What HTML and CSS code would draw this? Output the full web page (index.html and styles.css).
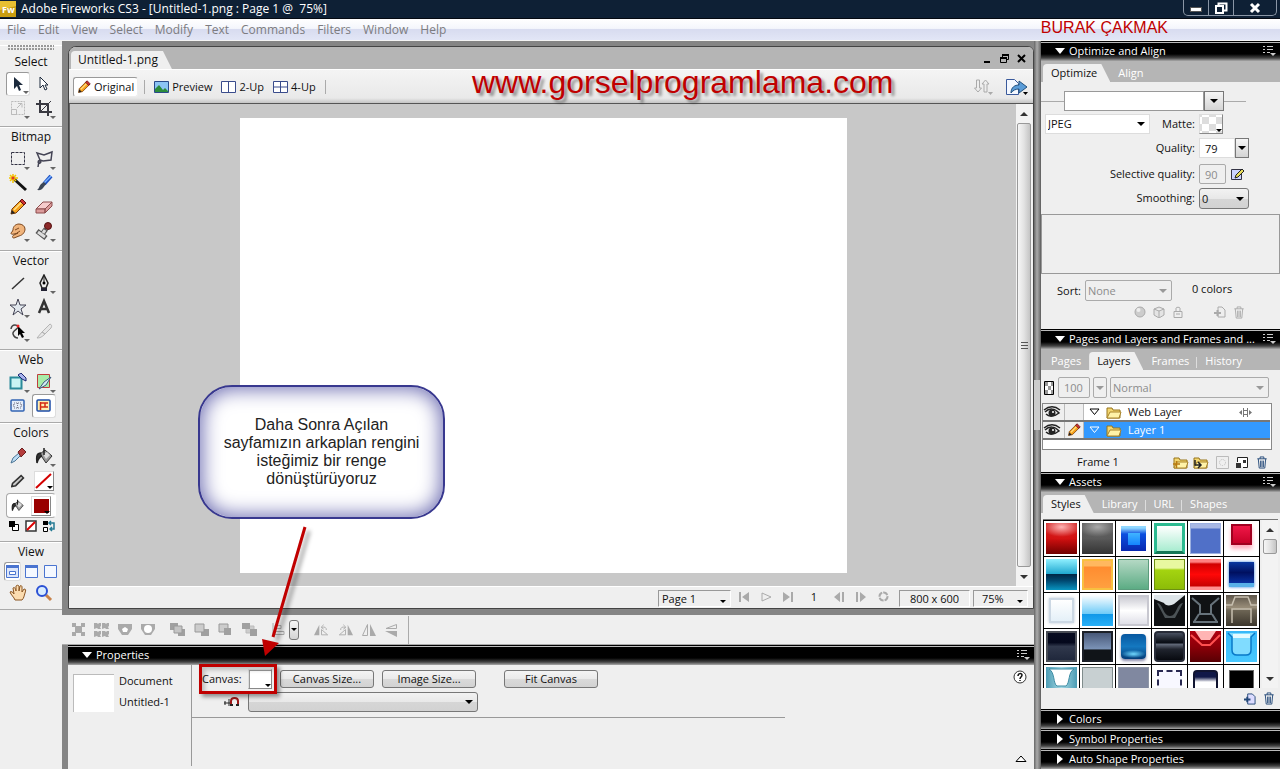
FILE: index.html
```html
<!DOCTYPE html>
<html lang="tr">
<head>
    <meta charset="UTF-8">
    <meta name="viewport" content="width=device-width, initial-scale=1.0">
    <title>Adobe Fireworks CS3</title>
    <link rel="stylesheet" href="styles.css">
</head>
<body>
<!-- shared icons -->
<svg class="defs" aria-hidden="true">
    <symbol id="i-menu" viewBox="0 0 14 12"><path d="M1 1h2v1H1zM1 4h2v1H1zM1 7h2v1H1zM5 1h6v1H5zM5 4h6v1H5zM5 7h3v1H5z" fill="#ccc"/><path d="M8 8h6l-3 3z" fill="#ccc"/></symbol>
    <symbol id="i-pencil" viewBox="0 0 18 18"><path d="M2 16l1-5 9-9 4 4-9 9z" fill="#f6a21c" stroke="#7a3c0c"/><path d="M5 12l8-8" stroke="#ffe38a" stroke-width="1.5"/><path d="M11 3l2-2 4 4-2 2z" fill="#c33" stroke="#611"/><path d="M2 16l1-4 3 3z" fill="#222"/></symbol>
    <symbol id="i-trash" viewBox="0 0 12 14"><path d="M1 3h10M4 3V1h4v2M2 3l1 10h6l1-10M4.500 5v7M6 5v7M7.500 5v7" fill="none" stroke="currentColor"/></symbol>
    <symbol id="i-new" viewBox="0 0 13 13"><path d="M4 1h5l3 3v8H4z" fill="#dcdcff" stroke="currentColor"/><path d="M0 7h7M3.500 4v6" stroke="currentColor" stroke-width="2"/></symbol>
    <symbol id="i-folder" viewBox="0 0 16 13"><path d="M1 12V2h5l1 2h7v8z" fill="#f4d770" stroke="#96741a"/><path d="M1 12l3-6h11l-2 6z" fill="#fff3a8" stroke="#a9842a"/></symbol>
    <symbol id="i-eye" viewBox="0 0 18 12"><path d="M1 4c5-4 11-4 16 0M2 6c4-4 10-4 14 1-5 4-10 4-13 1" fill="none" stroke="#222" stroke-width="1.500"/><circle cx="9" cy="7" r="3.500" fill="#222"/><circle cx="10" cy="6" r="1" fill="#fff"/></symbol>
    <symbol id="i-bucket" viewBox="0 0 18 18"><path d="M5 7l5-4 7 6-6 7z" fill="#999" stroke="#333"/><path d="M8 7l4-2 3 3-4 4z" fill="#ddd"/><path d="M9 8V1M6 6C2 6 1 9 2 16c1-4 2-6 5-7" fill="#333" stroke="#222" stroke-width="1.500"/></symbol>
</svg>

<header class="titlebar">
    <svg class="logo" width="16" height="16" viewBox="0 0 16 16"><rect width="16" height="16" fill="#c99d10"/><path d="M0 0h16v5L0 9z" fill="#e8c032"/><text x="2" y="12" font-size="9" font-weight="bold" fill="#fff" font-family="Open Sans, sans-serif">Fw</text></svg>
    <h1>Adobe Fireworks CS3 - [Untitled-1.png : Page 1 @ &nbsp;75%]</h1>
    <div class="window-buttons">
        <button aria-label="Minimize"><svg width="14" height="12"><rect x="1.500" y="5.500" width="11" height="4" fill="#fff" stroke="#555"/></svg></button>
        <button aria-label="Restore"><svg width="14" height="12"><path d="M4.500 1.500h8v7h-8z" fill="none" stroke="#fff" stroke-width="2"/><path d="M2 4h7v7H2z" fill="#0e2035" stroke="#fff" stroke-width="2"/></svg></button>
        <button class="wide" aria-label="Close"><svg width="14" height="12"><path d="M3 2l8 8M11 2l-8 8" stroke="#fff" stroke-width="3"/></svg></button>
    </div>
</header>

<nav class="menubar">
    <button>File</button><button>Edit</button><button>View</button><button>Select</button><button>Modify</button><button>Text</button><button>Commands</button><button>Filters</button><button>Window</button><button>Help</button>
    <span class="author">BURAK ÇAKMAK</span>
</nav>

<div class="workspace">
    <aside class="tools">
        <section class="first">
            <div class="grip"></div>
            <h2>Select</h2>
            <div class="tool-grid">
                <button class="more on" aria-label="Pointer"><svg width="18" height="18"><path d="M5 2v12l3-3 2 5 2-1-2-5h4z" fill="#1c2a3c"/></svg></button>
                <button aria-label="Subselection"><svg width="18" height="18"><path d="M5 2v11l3-3 2 5 2-1-2-4h3z" fill="#fff" stroke="#1c2a3c"/></svg></button>
                <button class="more" aria-label="Scale"><svg width="18" height="18" fill="none" stroke="#bbb"><path d="M2.500 2.500h13v13h-13z" stroke-dasharray="2 1"/><path d="M2.500 10.500h5v5h-5zM8 9l5-5M9 4.500h4v4"/></svg></button>
                <button class="more" aria-label="Crop"><svg width="18" height="18" fill="none" stroke="#3a3a42" stroke-width="2"><path d="M5 1v12h12M1 5h12v12"/><path d="M5 13L16 2" stroke-width="1"/></svg></button>
            </div>
        </section>
        <section>
            <h2>Bitmap</h2>
            <div class="tool-grid">
                <button class="more" aria-label="Marquee"><svg width="18" height="18"><path d="M2.500 2.500h13v12h-13z" fill="none" stroke="#334" stroke-dasharray="3 1"/></svg></button>
                <button class="more" aria-label="Lasso"><svg width="18" height="18"><path d="M2 3l7 2 8-3-1 8-8 1-3-1zM5 10c-3 1-2 4 0 3s0-3-1-2l-1 6" fill="none" stroke="#445" stroke-width="1.500"/></svg></button>
                <button aria-label="Magic Wand"><svg width="18" height="18"><path d="M5 5l12 11" stroke="#111" stroke-width="3"/><path d="M4 0v9M0 4h9M1 1l6 6M7 1L1 7" stroke="#f4c400" stroke-width="1.500"/><circle cx="4" cy="4" r="1.500" fill="#d33"/></svg></button>
                <button aria-label="Brush"><svg width="18" height="18"><path d="M16 2l-7 8" stroke="#1c50c4" stroke-width="4"/><path d="M16 2l-7 7" stroke="#7ab4ff" stroke-width="1.500"/><path d="M9 8l2 2-3 4c-2 3-5 2-6 2 2-1 2-4 4-6z" fill="#3c4656"/></svg></button>
                <button aria-label="Pencil"><svg width="18" height="18"><use href="#i-pencil"/></svg></button>
                <button aria-label="Eraser"><svg width="18" height="18"><path d="M1 11l7-7h9l-7 7z" fill="#f6cccc" stroke="#8c4c4c"/><path d="M1 11h9v4H1zM10 11l7-7v4l-7 7z" fill="#dc9c9c" stroke="#8c4c4c"/></svg></button>
                <button class="more" aria-label="Smudge"><svg width="18" height="18"><path d="M4 8c0-4 3-6 6-6s6 2 6 5-2 6-6 7l-5 2c-2 0-2-2 0-3l4-2-4 1c-3 1-4-1-2-2z" fill="#f0b47c" stroke="#7c4820"/><path d="M6 8l4-2M8 11l3-2" stroke="#7c4820"/></svg></button>
                <button class="more" aria-label="Rubber Stamp"><svg width="18" height="18"><circle cx="13" cy="4" r="3.500" fill="#8c2a2a" stroke="#511"/><path d="M11 7l-3 4M2 9l9 7" stroke="#555" stroke-width="5"/><path d="M3 10l7 5M10 8l-2 3" stroke="#ddd" stroke-width="3"/></svg></button>
            </div>
        </section>
        <section class="vector">
            <h2>Vector</h2>
            <div class="tool-grid">
                <button aria-label="Line"><svg width="18" height="18"><path d="M3 15L15 4" stroke="#333" stroke-width="1.500"/></svg></button>
                <button class="more" aria-label="Pen"><svg width="18" height="18"><path d="M9 1l4 8-2 5H7L5 9z" fill="#eee" stroke="#222" stroke-width="1.500"/><path d="M9 1v8" stroke="#222"/><circle cx="9" cy="9" r="1.500"/><path d="M6 14h6v3H6z" fill="#223"/></svg></button>
                <button class="more" aria-label="Star"><svg width="18" height="18"><path d="M9 1l2 6h6l-5 4 2 6-5-4-5 4 2-6-5-4h6z" fill="#e2e8ee" stroke="#445"/></svg></button>
                <button aria-label="Text"><svg width="18" height="18"><path d="M4 15L9 3l5 12M6 11h6" fill="none" stroke="#333" stroke-width="2.500"/></svg></button>
                <button class="more" aria-label="Freeform"><svg width="18" height="18"><path d="M2 7c1-6 7-4 7-2S3 9 4 12s2 4 5 4" fill="none" stroke="#444" stroke-width="1.500"/><path d="M9 4v10l2-2 2 4 2-1-2-4h3z"/><circle cx="9" cy="4" r="1.500" fill="#e22"/></svg></button>
                <button aria-label="Knife"><svg width="18" height="18"><path d="M2 16l5-6 3 2c-3 3-5 4-8 4zM7 10l8-8c2 1 2 2 1 4l-6 6z" fill="#e6e6e6" stroke="#b4b4b4"/></svg></button>
            </div>
        </section>
        <section class="web">
            <h2>Web</h2>
            <div class="tool-grid">
                <button class="more" aria-label="Hotspot"><svg width="18" height="18"><path d="M1.500 4.500h11v11h-11z" fill="#c8f4f4" stroke="#2a8a9a" stroke-width="2"/><path d="M9 2l3-2 5 5v3l-4-2z" fill="#aab4ee" stroke="#1a2670"/></svg></button>
                <button class="more" aria-label="Slice"><svg width="18" height="18"><path d="M2.500 1.500h12v13h-12z" fill="#a8eca8" stroke="#c03c3c"/><path d="M4 16l5-7 7-5-5 8z" fill="#d4eaf2" stroke="#3c5a7c"/></svg></button>
                <button aria-label="Hide slices"><svg width="18" height="18"><rect x="2" y="3" width="13" height="11" rx="1" fill="#e4edfa" stroke="#3264b4" stroke-width="1.500"/><path d="M5 6h7v5H5zM2 8h3M12 8h3M8.500 6v5" fill="none" stroke="#778" stroke-dasharray="1 1"/></svg></button>
                <button class="on" aria-label="Show slices"><svg width="18" height="18"><rect x="2" y="3" width="13" height="11" rx="1" fill="#fff0b0" stroke="#1c4ca8" stroke-width="1.500"/><path d="M5.500 5v8M5 6h8M5 10h8M10 6v4" stroke="#d42a14" stroke-width="1.500"/></svg></button>
            </div>
        </section>
        <section class="colors">
            <h2>Colors</h2>
            <div class="tool-grid">
                <button aria-label="Eyedropper"><svg width="18" height="18"><path d="M2 16l2-5 6-5 2 2-6 6z" fill="#bcdcf4" stroke="#4c7494"/><path d="M9 5l4-4 4 4-5 5z" fill="#b43c3c" stroke="#6a2020"/></svg></button>
                <button class="more" aria-label="Paint Bucket"><svg width="18" height="18"><use href="#i-bucket"/></svg></button>
                <button aria-label="Stroke"><svg width="14" height="14" viewBox="0 0 18 18"><path d="M1 16l1-4 11-10 3 3L6 15z" fill="#ccc" stroke="#333" stroke-width="2"/></svg></button>
                <button class="well" aria-label="Stroke color"><svg width="18" height="18"><path d="M1 16L16 2" stroke="#d40000" stroke-width="2"/></svg></button>
                <div class="fill-row">
                    <button aria-label="Fill"><svg width="13" height="15" viewBox="0 0 18 18"><use href="#i-bucket"/></svg></button>
                    <button class="well" aria-label="Fill color"><svg width="18" height="18"><path d="M2 2h15v14H2z" fill="#900"/></svg></button>
                </div>
            </div>
            <div class="small-row">
                <button aria-label="Default colors"><svg width="12" height="12"><path d="M4.500 4.500h6v6h-6z" fill="#fff" stroke="#000"/><path d="M1 1h6v6H1z"/></svg></button>
                <button aria-label="No color"><svg width="12" height="12"><path d="M1 1h10v10H1z" fill="#fff" stroke="#333" stroke-width="1.500"/><path d="M2 10l8-8" stroke="#d00" stroke-width="2"/></svg></button>
                <button aria-label="Swap colors"><svg width="14" height="12"><path d="M1 1h5v4H1z"/><path d="M1.500 7.500h4v4h-4z" fill="#fff" stroke="#000"/><path d="M7 3h5v6H8M9 1L7 3l2 2M10 7L8 9l2 2" fill="none" stroke="#247a94" stroke-width="1.500"/></svg></button>
            </div>
        </section>
        <section class="last">
            <h2>View</h2>
            <div class="view-row">
                <button class="on" aria-label="Standard screen"><svg width="13" height="13"><path d="M.5.5h12v12H.5z" fill="#dce6fa" stroke="#4a74d0"/><path d="M0 0h13v3H0z" fill="#4a74d0"/><path d="M3.500 6.500h6v3h-6z" fill="#fff" stroke="#4a74d0"/></svg></button>
                <button aria-label="Full screen with menus"><svg width="13" height="13"><path d="M.5.5h12v12H.5z" fill="#f4f8ff" stroke="#4a74d0"/><path d="M0 0h13v3H0z" fill="#4a74d0"/></svg></button>
                <button aria-label="Full screen"><svg width="13" height="13"><path d="M.5.5h12v12H.5z" fill="#f4f8ff" stroke="#4a74d0"/></svg></button>
            </div>
            <div class="tool-grid">
                <button aria-label="Hand"><svg width="18" height="18"><path d="M6 16c-1-3-4-5-5-8 1-1 3 0 4 2L4 4c1-1 2-1 3 3V2c1-1 2-1 3 0v5l1-5c1-1 2 0 2 1v5l2-3c2 0 2 1 1 4s-1 5-3 7z" fill="#fbdcb0" stroke="#8a5420"/></svg></button>
                <button aria-label="Zoom"><svg width="18" height="18"><path d="M11 11l5 5" stroke="#c8824a" stroke-width="3"/><circle cx="7" cy="7" r="5" fill="#d8ecff" stroke="#2a50d4" stroke-width="2"/></svg></button>
            </div>
        </section>
    </aside>

    <main class="center">
        <div class="document">
            <div class="doc-tabs">
                <button class="tab active">Untitled-1.png</button>
                <div class="doc-buttons">
                    <button aria-label="Minimize document"><svg width="11" height="11"><path d="M2 8h6v2H2z"/></svg></button>
                    <button aria-label="Restore document"><svg width="11" height="11"><path d="M3.500 4V1.500h6v5H8M1.500 4.500h6v5h-6z" fill="none" stroke="#000"/><path d="M3 1h7v2H3zM1 4h7v2H1z"/></svg></button>
                    <button aria-label="Close document"><svg width="11" height="11"><path d="M2 2l7 7M9 2L2 9" stroke="#000" stroke-width="2"/></svg></button>
                </div>
            </div>
            <div class="doc-toolbar">
                <button class="mode on"><svg width="14" height="14"><use href="#i-pencil"/></svg>Original</button>
                <i class="sep"></i>
                <button class="mode"><svg width="15" height="12"><path d="M.5.5h14v11H.5z" fill="#8cc4f4" stroke="#2a4a8a"/><path d="M1 8l4-4 4 5 2-2 3 3v1H1z" fill="#2c8c3c"/></svg>Preview</button>
                <button class="mode"><svg width="15" height="12"><path d="M.5.5h14v11H.5zM7.500 0v12" fill="#fff" stroke="#3a4c8c"/></svg>2-Up</button>
                <button class="mode"><svg width="15" height="12"><path d="M.5.5h14v11H.5zM7.500 0v12M0 6h15" fill="#fff" stroke="#3a4c8c"/></svg>4-Up</button>
                <i class="sep"></i>
                <div class="doc-actions">
                    <button aria-label="File management"><svg width="20" height="18"><path d="M3.500 2h3v8h2l-3.500 4-3.500-4h2zM11 14h3V6h2l-3.500-4L9 6h2z" fill="#eee" stroke="#aaa"/><path d="M15 14h5l-2.500 3z" fill="#aaa"/></svg></button>
                    <button aria-label="Quick Export"><svg width="24" height="18"><path d="M1.500 1.500h8l4 4v11h-12z" fill="#f4f8ff" stroke="#3a5a9c"/><path d="M6 15c0-6 4-8 8-8V3l8 6-8 6v-4c-3 0-6 1-8 4z" fill="#5a9cd8" stroke="#24507c"/><path d="M18 14h5l-2.500 3z"/></svg></button>
                </div>
            </div>
            <div class="view">
                <div class="stage"><div class="canvas"></div></div>
                <div class="scrollbar"><i class="up"></i><div class="thumb"><i class="lines"></i></div><i class="down"></i></div>
            </div>
            <div class="status">
                <label class="pick page"><select aria-label="Page"><option>Page 1</option></select></label>
                <div class="player">
                    <button aria-label="First frame"><svg width="11" height="10"><path d="M0 0h2v10H0zM10 0v10L3 5z" fill="#aaa"/></svg></button>
                    <button aria-label="Play"><svg width="11" height="10"><path d="M1 1l9 4-9 4z" fill="none" stroke="#aaa"/></svg></button>
                    <button aria-label="Last frame"><svg width="11" height="10"><path d="M8 0h2v10H8zM0 0v10l7-5z" fill="#aaa"/></svg></button>
                    <span>1</span>
                    <button aria-label="Previous frame"><svg width="11" height="10"><path d="M8 0h2v10H8zM6 0v10L0 5z" fill="#aaa"/></svg></button>
                    <button aria-label="Next frame"><svg width="11" height="10"><path d="M0 0h2v10H0zM4 0v10l6-5z" fill="#aaa"/></svg></button>
                    <button aria-label="Stop"><svg width="11" height="11"><circle cx="5.500" cy="5.500" r="4" fill="none" stroke="#aaa" stroke-width="2" stroke-dasharray="5 1"/></svg></button>
                </div>
                <div class="size">800 x 600</div>
                <label class="pick zoom"><select aria-label="Zoom level"><option>75%</option></select></label>
            </div>
        </div>

        <div class="modify-bar">
            <button aria-label="Group"><svg width="13" height="13" fill="#aaa"><path d="M3 3h7v7H3zM0 0h4v4H0zM9 0h4v4H9zM0 9h4v4H0zM9 9h4v4H9z"/></svg></button>
            <button aria-label="Ungroup"><svg width="15" height="14" fill="#aaa"><path d="M0 0h3l1 1 1-1h2v3L6 4l1 2H4L3 5 0 6V3zM8 0h3l1 1 1-1h2v3l-1 1 1 2h-3l-1-1-3 1V3zM0 8h3l1 1 1-1h2v3l-1 1 1 2H4l-1-1-3 1v-3zM8 8h3l1 1 1-1h2v3l-1 1 1 2h-3l-1-1-3 1v-3z"/></svg></button>
            <button aria-label="Join"><svg width="14" height="13"><path d="M0 1h14v5L10 12H4L0 6z" fill="#aaa"/><path d="M4 6l3-2 3 2-1 3H5z" fill="#fff"/></svg></button>
            <button aria-label="Split"><svg width="14" height="13"><path d="M0 1h14v5L10 12H4L0 6z" fill="#aaa"/><circle cx="7" cy="6" r="4" fill="#fff"/></svg></button>
            <i class="gap"></i>
            <button aria-label="Bring to front"><svg width="15" height="13"><path d="M0 0h8v7H0zM8 6h7v7H8z" fill="#a0a0a0"/><path d="M4 3h8v7H4z" fill="#c4c4c4" stroke="#999"/></svg></button>
            <button aria-label="Bring forward"><svg width="15" height="13"><path d="M7 6h8v7H7z" fill="#a0a0a0"/><path d="M1 1h9v8H1z" fill="#ccc" stroke="#999"/></svg></button>
            <button aria-label="Send backward"><svg width="15" height="13"><path d="M1 1h9v8H1z" fill="#ccc" stroke="#999"/><path d="M6 5h7v7H6z" fill="#a0a0a0"/></svg></button>
            <button aria-label="Send to back"><svg width="15" height="13"><path d="M4 3h8v7H4z" fill="#ccc" stroke="#bbb"/><path d="M0 0h8v6H0zM8 6h7v7H8z" fill="#a0a0a0"/></svg></button>
            <i class="gap"></i>
            <button aria-label="Align"><svg width="13" height="14"><path d="M1 0v14M3 2.500h6v3H3zM3 8.500h9v3H3z" fill="none" stroke="#aaa"/></svg></button>
            <button class="drop tiny" aria-label="Align menu"></button>
            <i class="gap"></i>
            <button aria-label="Rotate left"><svg width="15" height="14" viewBox="0 0 17 14"><path d="M6 1v12H0z" fill="#aaa"/><path d="M8.500 12.500h7l-7-6zM9 4c3-1 5 0 5 3M11 1L8 4l3 2" fill="none" stroke="#aaa"/></svg></button>
            <button aria-label="Rotate right"><svg width="15" height="14" viewBox="0 0 17 14"><path d="M11 1v12h6z" fill="#aaa"/><path d="M8.500 12.500h-7l7-6zM8 4C5 3 3 4 3 7M6 1l3 3-3 2" fill="none" stroke="#aaa"/></svg></button>
            <button aria-label="Flip horizontal"><svg width="14" height="14"><path d="M5.500 1.500v11h-5z" fill="none" stroke="#aaa"/><path d="M8 1v12h6z" fill="#aaa"/></svg></button>
            <button aria-label="Flip vertical"><svg width="14" height="14"><path d="M11.500 1.500v4H1z" fill="none" stroke="#aaa"/><path d="M12 8v6L0 8z" fill="#aaa"/></svg></button>
            <i class="end"></i>
        </div>

        <section class="properties">
            <h2 class="bar"><i class="tri open"></i>Properties<svg width="14" height="12"><use href="#i-menu"/></svg></h2>
            <div class="props-body">
                <div class="props-doc">
                    <div class="doc-thumb"></div>
                    <p>Document<br>Untitled-1</p>
                </div>
                <div class="props-main">
                    <div class="props-row">
                        <span class="canvas-label">Canvas:</span><button class="well big" aria-label="Canvas color"></button>
                        <button class="push">Canvas Size...</button>
                        <button class="push">Image Size...</button>
                        <button class="push fit">Fit Canvas</button>
                    </div>
                    <div class="props-row second">
                        <svg width="16" height="12"><path d="M1 5v4M0 7h8M5 3v7" stroke="#222" fill="none"/><path d="M7 10V5c0-4 7-4 7 0v5" fill="none" stroke="#a01818" stroke-width="2"/><path d="M6 9h3M12 9h3" stroke="#222" stroke-width="2"/></svg>
                        <label class="pick glossy"><select aria-label="Preset"><option></option></select></label>
                    </div>
                </div>
                <div class="props-foot"></div>
                <div class="props-side">
                    <button aria-label="Help"><svg width="14" height="14"><circle cx="7" cy="7" r="6" fill="#fff" stroke="#333"/><path d="M5 6c0-3 4-3 4-1S7 7 7 9M7 10v1" fill="none" stroke="#111" stroke-width="1.500"/></svg></button>
                    <button aria-label="Collapse"><svg width="12" height="7"><path d="M1 6.500h10L6 1z" fill="#fff" stroke="#000"/></svg></button>
                </div>
            </div>
        </section>
    </main>

    <div class="gutter"><i></i></div>

    <aside class="panels">
        <section>
            <h2 class="bar"><i class="tri open"></i>Optimize and Align<svg width="14" height="12"><use href="#i-menu"/></svg></h2>
            <div class="tabs"><button class="tab active">Optimize</button><button class="tab">Align</button></div>
            <div class="optimize">
                <div class="preset"><input type="text" aria-label="Saved settings"><button class="drop" aria-label="Saved settings list"></button></div>
                <div class="fields">
                    <div class="format"><label class="pick"><select aria-label="Format"><option>JPEG</option></select></label><span>Matte:</span></div>
                    <button class="well matte" aria-label="Matte color"></button>
                    <label for="quality">Quality:</label>
                    <div><input id="quality" type="text" value="79"><button class="drop slim" aria-label="Quality slider"></button></div>
                    <label for="selective">Selective quality:</label>
                    <div class="selective"><input id="selective" type="text" value="90" disabled><button aria-label="Edit selective quality"><svg width="15" height="13"><path d="M1.500 1.500h10v10h-10z" fill="#ccd4ff" stroke="#334"/><path d="M5 10l1-3 6-6 2 2-6 6z" fill="#e8dc5c" stroke="#222"/></svg></button></div>
                    <label for="smoothing">Smoothing:</label>
                    <div class="pick glossy smooth"><select id="smoothing"><option>0</option></select></div>
                </div>
                <div class="palette"></div>
                <div class="sort">
                    <label for="sort">Sort:</label>
                    <div class="pick off"><select id="sort" disabled><option>None</option></select></div>
                    <span>0 colors</span>
                </div>
                <div class="palette-icons">
                    <svg width="12" height="12"><circle cx="6" cy="6" r="5" fill="#ccc" stroke="#aaa"/><circle cx="4.500" cy="4" r="2" fill="#eee"/></svg>
                    <svg width="12" height="12"><path d="M1 3l5-2 5 2v6l-5 3-5-3zM1 3l5 2 5-2M6 5v7" fill="#e4e4e4" stroke="#aaa"/></svg>
                    <svg width="12" height="12"><path d="M2 5.500h8v6H2zM4 5V2c0-1 4-1 4 0v3M4 8h4" fill="none" stroke="#aaa"/></svg>
                    <svg class="push-right" width="12" height="12"><path d="M4 1h4l3 3v7H4z" fill="#eee" stroke="#aaa"/><path d="M0 7h7M3.500 4v6" stroke="#aaa" stroke-width="2"/></svg>
                    <svg width="12" height="13"><use href="#i-trash"/></svg>
                </div>
            </div>
        </section>

        <section>
            <h2 class="bar"><i class="tri open"></i>Pages and Layers and Frames and ...<svg width="14" height="12"><use href="#i-menu"/></svg></h2>
            <div class="tabs"><button class="tab">Pages</button><button class="tab active">Layers</button><button class="tab line">Frames</button><button class="tab">History</button></div>
            <div class="layers">
                <div class="blend">
                    <svg width="10" height="14"><path d="M.5.5h9v13h-9z" fill="#fff" stroke="#000"/><path d="M1 1h3v4H1zM4 5h3v4H4zM1 9h3v4H1zM7 1h2v4H7zM7 9h2v4H7z" fill="#999"/></svg>
                    <input type="text" value="100" aria-label="Opacity" disabled><button class="drop off" aria-label="Opacity slider" disabled></button>
                    <label class="pick off"><select aria-label="Blend mode" disabled><option>Normal</option></select></label>
                </div>
                <ul class="layer-list">
                    <li><span><svg width="18" height="12"><use href="#i-eye"/></svg></span><span class="pen"></span><span class="name"><svg width="11" height="8"><path d="M1 1h9L5.500 6.500z" fill="#fff" stroke="#000"/></svg><svg width="16" height="13"><use href="#i-folder"/></svg>Web Layer</span><svg class="share" width="13" height="9"><path d="M4.500 0v9M8.500 0v9M4 2.500h5M4 6.500h5" stroke="#777"/><path d="M3 2v5L0 4.500zM10 2v5l3-2.500z" fill="#777"/></svg></li>
                    <li class="selected"><span><svg width="18" height="12"><use href="#i-eye"/></svg></span><span class="pen"><svg width="14" height="14"><use href="#i-pencil"/></svg></span><span class="name"><svg width="11" height="8"><path d="M1 1h9L5.500 6.500z" fill="#3399ff" stroke="#fff"/></svg><svg width="16" height="13"><use href="#i-folder"/></svg>Layer 1</span></li>
                </ul>
                <div class="layer-foot">
                    <span>Frame 1</span>
                    <button aria-label="New folder"><svg width="16" height="13"><use href="#i-folder"/><path d="M0 8h7M3.500 5v7" stroke="#b87a10" stroke-width="1.500"/></svg></button>
                    <button aria-label="New sub layer"><svg width="16" height="13"><use href="#i-folder"/><path d="M2 4v5h5M5 6l3 3-3 3" fill="none" stroke="#222" stroke-width="1.500"/></svg></button>
                    <button class="mask" aria-label="Add mask"><svg width="13" height="13"><path d="M.5.5h12v12H.5z" fill="none" stroke="#bbb"/><circle cx="6.500" cy="6.500" r="3" fill="none" stroke="#bbb" stroke-dasharray="1 1"/></svg></button>
                    <button aria-label="New bitmap"><svg width="13" height="13"><path d="M1.500 6V1.500h10v10H7" fill="#fff" stroke="#222"/><path d="M7 4h3v3H7zM0 7h5v5H0z" fill="#333"/></svg></button>
                    <button class="dark" aria-label="Delete layer"><svg width="12" height="13"><use href="#i-trash"/></svg></button>
                </div>
            </div>
        </section>

        <section class="assets">
            <h2 class="bar"><i class="tri open"></i>Assets<svg width="14" height="12"><use href="#i-menu"/></svg></h2>
            <div class="tabs"><button class="tab active">Styles</button><button class="tab line">Library</button><button class="tab line">URL</button><button class="tab">Shapes</button></div>
            <div class="styles-view">
                <div class="style-grid">
                    <button aria-label="Style 1"><i class="red-gloss"></i></button><button aria-label="Style 2"><i class="gray-gloss"></i></button><button aria-label="Style 3"><i class="blue-box small"></i></button><button aria-label="Style 4"><i class="mint"></i></button><button aria-label="Style 5"><i class="slate-blue"></i></button><button aria-label="Style 6"><i class="crimson small"></i></button>
                    <button aria-label="Style 7"><i class="aqua"></i></button><button aria-label="Style 8"><i class="orange"></i></button><button aria-label="Style 9"><i class="sage"></i></button><button aria-label="Style 10"><i class="lime"></i></button><button aria-label="Style 11"><i class="red"></i></button><button aria-label="Style 12"><i class="navy small"></i></button>
                    <button aria-label="Style 13"><i class="ice small"></i></button><button aria-label="Style 14"><i class="sky"></i></button><button aria-label="Style 15"><i class="silver"></i></button><button aria-label="Style 16"><i class="black"><svg viewBox="0 0 31 31"><path d="M0 0h31L20 9c-3 2-9 2-10-1L0 4z" fill="#dde4e8"/><path d="M3 8c6 0 6 13 13 13s6-12 13-13l-8 15H11z" fill="#4c5356"/></svg></i></button><button aria-label="Style 17"><i class="black"><svg viewBox="0 0 31 31"><path d="M2 3l8 7v9h11v-9l8-7M4 27l5-8M27 27l-5-8M3 27h25" fill="none" stroke="#66727a" stroke-width="2"/></svg></i></button><button aria-label="Style 18"><i class="bronze"><svg viewBox="0 0 31 31"><path d="M0 10h6l3-8h13l3 8h6M6 28V14h19v14" fill="none" stroke="#c8c0b0" stroke-width="1.500"/></svg></i></button>
                    <button aria-label="Style 19"><i class="midnight"></i></button><button aria-label="Style 20"><i class="steel"></i></button><button aria-label="Style 21"><i class="ocean small"></i></button><button aria-label="Style 22"><i class="ink"></i></button><button aria-label="Style 23"><i class="dark-red"><svg viewBox="0 0 31 31"><path d="M5 0h21l-6 9h-9z" fill="#ffb4b4"/><path d="M1 4l11 10h8L30 4" fill="none" stroke="#ff5050" stroke-width="2"/></svg></i></button><button aria-label="Style 24"><i class="cyan"><svg viewBox="0 0 31 31"><path d="M2 2l4 4v13c0 3 2 5 5 5h9c4 0 5-2 5-5V6l4-4" fill="#80dcff" stroke="#0878c8" stroke-width="1.500"/><path d="M7 3h17v4H7z" fill="#e4faff"/></svg></i></button>
                    <button aria-label="Style 25"><i class="teal"><svg viewBox="0 0 31 31"><path d="M3 2h25c-6 3-4 14-8 17h-9C7 17 9 5 3 2z" fill="#fff" stroke="#3c8ca4"/></svg></i></button><button aria-label="Style 26"><i class="pale"></i></button><button aria-label="Style 27"><i class="dusk"></i></button><button aria-label="Style 28"><i class="frame small"></i></button><button aria-label="Style 29"><i class="cap small"></i></button><button aria-label="Style 30"><i class="solid small"></i></button>
                </div>
                <div class="scrollbar"><i class="up"></i><div class="thumb short"></div><i class="down"></i></div>
            </div>
            <div class="asset-foot">
                <button class="dark" aria-label="New style"><svg width="12" height="12"><use href="#i-new"/></svg></button>
                <button class="dark" aria-label="Delete style"><svg width="12" height="13"><use href="#i-trash"/></svg></button>
            </div>
        </section>

        <h2 class="bar"><i class="tri"></i>Colors</h2>
        <h2 class="bar"><i class="tri"></i>Symbol Properties</h2>
        <h2 class="bar"><i class="tri"></i>Auto Shape Properties</h2>
    </aside>

    <!-- notes on top of the workspace -->
    <div class="site">www.gorselprogramlama.com</div>
    <div class="callout">Daha Sonra Açılan sayfamızın arkaplan rengini isteğimiz bir renge dönüştürüyoruz</div>
    <svg class="arrow" width="60" height="140"><path d="M45 2L13 112" stroke="#c00000" stroke-width="3"/><path d="M5 131L2 114l17 4z" fill="#c00000"/></svg>
    <div class="highlight"></div>
</div>
</body>
</html>
```
FILE: styles.css
```css
* {
    box-sizing: border-box;
}
body {
    margin: 0;
    min-height: 100vh;
    display: flex;
    flex-direction: column;
    font-family: "Open Sans", "Noto Sans", sans-serif;
    font-size: 12px;
    line-height: 16px;
    color: #111;
    background: #efefef;
}
h1, h2, p, ul {
    margin: 0;
    padding: 0;
    font-size: 12px;
    font-weight: normal;
}
ul {
    list-style: none;
}
button, input, select {
    font-family: inherit;
    font-size: 11px;
    line-height: 16px;
    color: inherit;
    margin: 0;
    padding: 0;
    border: 0;
    border-radius: 0;
    background: none;
}
svg {
    display: block;
    flex: none;
}
.defs {
    position: absolute;
    width: 0;
    height: 0;
}

/* Title bar and menu */
.titlebar {
    display: flex;
    align-items: center;
    height: 19px;
    padding-right: 3px;
    background: #0e2035;
    border-bottom: 1px solid #050a12;
    color: #fff;
}
.titlebar h1 {
    flex: 1;
    padding-left: 5px;
}
.window-buttons {
    display: flex;
    align-self: flex-start;
    height: 16px;
    border: 1px solid #8a96a6;
    border-top: 0;
    border-radius: 0 0 5px 5px;
}
.window-buttons button {
    display: flex;
    align-items: center;
    justify-content: center;
    width: 25px;
    border-right: 1px solid #8a96a6;
}
.window-buttons .wide {
    width: 42px;
    border-right: 0;
}
.menubar {
    position: relative;
    display: flex;
    gap: 12px;
    height: 22px;
    padding-left: 7px;
    background: linear-gradient(#fff, #f4f6fc 45%, #d8dcf0 50%, #e2e6f6);
    border-bottom: 1px solid #f4f4f4;
    color: #7c7c80;
}
.menubar button {
    font-size: 12px;
}
.author {
    position: absolute;
    right: 112px;
    top: 0;
    font-family: "Liberation Sans", Arial, sans-serif;
    font-size: 16px;
    line-height: 18px;
    color: #c00000;
}
.workspace {
    position: relative;
    flex: 1;
    display: grid;
    grid-template-columns: 62px minmax(0, 1fr) 6px 240px;
    background: #858585;
}

/* Tool column */
.tools {
    background: #efefef;
}
.tools section {
    padding-bottom: 7px;
    border-top: 1px solid #aaa;
    box-shadow: inset 0 1px #fff;
}
.tools .first {
    padding-bottom: 6px;
    border-top: 0;
}
.tools .vector {
    padding-bottom: 6px;
}
.tools .web, .tools .last {
    padding-bottom: 4px;
}
.grip {
    height: 5px;
    margin: 4px 8px 2px;
    background: radial-gradient(circle at 1px 1px, #999 1px, transparent 1px) 0 0 / 3px 3px;
}
.tools h2 {
    height: 20px;
    line-height: 20px;
    text-align: center;
}
.tool-grid {
    display: grid;
    grid-template-columns: 24px 24px;
    grid-auto-rows: 24px;
    column-gap: 2px;
    padding-left: 6px;
}
.tools button {
    position: relative;
    display: flex;
    align-items: center;
    justify-content: center;
}
.tools .on {
    background: #fff;
    border: 1px solid #999;
    border-right-color: #ddd;
    border-bottom-color: #ddd;
    border-radius: 3px;
}
.more::after, .well::after {
    content: "";
    position: absolute;
    right: 0;
    bottom: 1px;
    border: 3px solid transparent;
    border-top-color: #666;
    border-bottom: 0;
}
.well {
    position: relative;
    background: #fff;
    border: 1px solid #ddd;
    border-right-color: #888;
    border-bottom-color: #888;
}
.well::after {
    border-top-color: #000;
}
.tools .well {
    width: 20px;
    height: 20px;
    place-self: center;
}
.colors .tool-grid {
    grid-auto-rows: 25px;
}
.fill-row {
    grid-column: 1 / 3;
    display: flex;
    align-items: center;
    justify-content: space-between;
    padding: 0 4px;
    border: 1px solid #aaa;
    border-right-color: #fff;
    border-radius: 4px;
    background: #fff;
}
.small-row {
    display: flex;
    gap: 5px;
    height: 16px;
    padding-left: 8px;
}
.view-row {
    display: flex;
    gap: 2px;
    height: 19px;
    padding-left: 4px;
}
.view-row button {
    width: 17px;
}
.last {
    border-bottom: 1px solid #aaa;
}

/* Document window */
.center {
    display: flex;
    flex-direction: column;
    min-width: 0;
}
.document {
    flex: 1;
    display: flex;
    flex-direction: column;
    margin: 5px 0 0 6px;
    border: 1px solid #444;
    border-radius: 8px 6px 0 0;
    background: #efefef;
    overflow: hidden;
}
.doc-tabs {
    display: flex;
    align-items: flex-end;
    height: 23px;
    padding-left: 2px;
    background: #b5b5b5;
    border-bottom: 1px solid #fff;
}
.tab {
    height: 18px;
    padding: 0 7px;
    font-size: 12px;
    color: #fff;
}
.tab.active {
    padding: 0 14px 0 7px;
    color: #111;
    background: #efefef;
    border-radius: 4px 0 0 0;
    clip-path: polygon(0 0, calc(100% - 9px) 0, 100% 100%, 0 100%);
}
.doc-buttons {
    display: flex;
    gap: 6px;
    margin-left: auto;
    padding: 0 6px 5px 0;
}
.doc-toolbar {
    display: flex;
    align-items: center;
    gap: 9px;
    height: 34px;
    padding: 0 4px;
    background: linear-gradient(#f4f4f4, #e9e9e9 85%, #c4c4c4);
    border-bottom: 1px solid #555;
}
.mode {
    display: flex;
    align-items: center;
    gap: 3px;
    height: 20px;
}
.mode.on {
    margin-right: -3px;
    padding: 0 3px;
    background: #fff;
    border: 1px solid #999;
    border-right-color: #eee;
    border-bottom-color: #eee;
    border-radius: 3px;
}
.sep {
    width: 1px;
    height: 14px;
    background: #aaa;
}
.doc-actions {
    display: flex;
    gap: 12px;
    margin-left: auto;
}
.view {
    flex: 1;
    display: flex;
    min-height: 480px;
    border-left: 1px solid #666;
}
.stage {
    flex: 1;
    display: flex;
    align-items: center;
    justify-content: center;
    background: #c8c8c8;
}
.canvas {
    width: 607px;
    height: 455px;
    background: #fff;
}
.scrollbar {
    display: flex;
    flex-direction: column;
    width: 16px;
    background: #f3f3f3;
}
.view .scrollbar {
    margin-right: 1px;
}
.up, .down {
    height: 19px;
    display: grid;
    place-items: center;
}
.up::before, .down::before {
    content: "";
    border: 4px solid transparent;
    border-bottom-color: #333;
    border-top: 0;
}
.down::before {
    border-top: 4px solid #333;
    border-bottom: 0;
}
.thumb {
    flex: 1;
    display: grid;
    place-items: center;
    margin: 0 1px;
    border: 1px solid #999;
    border-radius: 2px;
    background: linear-gradient(90deg, #f6f6f6, #e2e2e2 50%, #c4c4c4);
}
.thumb.short {
    flex: none;
    height: 15px;
    margin-bottom: auto;
}
.lines {
    width: 7px;
    height: 7px;
    background: repeating-linear-gradient(#555 0 1px, transparent 1px 3px);
}
.status {
    display: flex;
    align-items: flex-start;
    justify-content: flex-end;
    gap: 3px;
    height: 22px;
    padding: 3px 5px 0 0;
    border-top: 1px solid #fff;
    font-size: 11px;
}
.status .pick, .size {
    height: 17px;
    border: 1px solid #999;
    border-right-color: #fff;
    border-bottom-color: #fff;
}
.page {
    width: 73px;
}
.size {
    width: 71px;
    text-align: center;
}
.zoom {
    width: 55px;
}
.player {
    display: flex;
    align-items: center;
    gap: 11px;
    height: 13px;
    padding: 0 7px 0 5px;
}
.player span {
    width: 18px;
    text-align: center;
}

/* Form bits */
.pick {
    position: relative;
    display: block;
}
.pick::after, .drop::after {
    content: "";
    position: absolute;
    right: 4px;
    top: 50%;
    margin-top: -2px;
    border: 4px solid transparent;
    border-top-color: #000;
    border-bottom: 0;
    pointer-events: none;
}
.status .pick::after {
    border-width: 3px;
    border-bottom: 0;
    margin-top: 1px;
}
.pick select {
    display: block;
    width: 100%;
    height: 100%;
    padding-left: 2px;
    appearance: none;
}
.status .page select {
    padding-left: 3px;
}
.status .zoom select {
    padding-left: 8px;
}
.drop {
    position: relative;
    width: 20px;
    height: 20px;
    border: 1px solid #777;
    background: linear-gradient(#f6f6f6, #d4d4d4);
    vertical-align: top;
}
.drop::after {
    right: 5px;
}
.drop.slim {
    width: 14px;
}
.drop.slim::after {
    right: 2px;
}
.glossy {
    border: 1px solid #777;
    border-radius: 3px;
    background: linear-gradient(#f2f2f2, #e8e8e8 50%, #d6d6d6 50%, #d2d2d2);
}
.off {
    color: #8c8c8c;
    border: 1px solid #aaa;
    border-radius: 2px;
    background: #efefef;
}
.off select, input:disabled {
    color: #8c8c8c;
    opacity: 1;
}
.pick.off::after, .drop.off::after {
    border-top-color: #999;
}

/* Modify toolbar */
.modify-bar {
    display: flex;
    align-items: center;
    gap: 9px;
    height: 30px;
    margin-top: 6px;
    padding-left: 10px;
    background: #efefef;
    border-bottom: 1px solid #aaa;
}
.modify-bar .gap {
    margin-right: -3px;
}
.drop.tiny {
    width: 10px;
    margin-left: -5px;
    border-radius: 3px;
}
.drop.tiny::after {
    right: 1px;
    border-width: 3px;
    border-bottom: 0;
}
.end {
    width: 1px;
    height: 28px;
    background: #aaa;
}

/* Black panel headings */
.bar {
    display: flex;
    align-items: center;
    gap: 4px;
    height: 20px;
    padding: 0 4px 0 14px;
    font-size: 11px;
    white-space: nowrap;
    color: #fff;
    border-top: 1px solid #000;
    border-bottom: 1px solid #999;
    background: linear-gradient(#bbb 0 1px, #000 1px 12px, #444 16px, #888);
}
.bar svg {
    margin-left: auto;
}
.tri {
    margin: 0 2px;
    border: 5px solid transparent;
    border-left: 6px solid #fff;
    border-right: 0;
}
.tri.open {
    margin: 0;
    border: 5px solid transparent;
    border-top: 6px solid #fff;
    border-bottom: 0;
}

/* Properties */
.properties {
    margin-left: 6px;
    background: #efefef;
}
.props-body {
    display: grid;
    grid-template-columns: 124px 593px 1fr;
    grid-template-rows: 53px 1fr;
    min-height: 104px;
    font-size: 11px;
}
.props-doc {
    grid-row: 1 / 3;
    display: flex;
    gap: 5px;
    padding: 9px 0 0 5px;
    margin-bottom: 3px;
    border-right: 1px solid #999;
}
.props-doc p {
    font-size: 11px;
    line-height: 21px;
    margin-top: -4px;
}
.doc-thumb {
    width: 41px;
    height: 38px;
    background: #fff;
    border: 1px solid #bbb;
    border-right: 0;
    border-bottom: 0;
}
.props-main {
    border-bottom: 1px solid #999;
    padding: 4px 0 0 10px;
}
.props-row {
    display: flex;
    align-items: center;
    gap: 8px;
    height: 20px;
}
.props-row.second {
    margin-top: 3px;
    padding-left: 22px;
}
.canvas-label {
    width: 38px;
}
.well.big {
    width: 24px;
    height: 20px;
    box-shadow: inset 1px 1px #999;
}
.push {
    width: 94px;
    height: 18px;
    border: 1px solid #777;
    border-radius: 3px;
    background: linear-gradient(#f4f4f4, #eaeaea 50%, #dadada 50%, #d2d2d2);
}
.push.fit {
    margin-left: 20px;
}
.props-row .glossy {
    width: 230px;
    height: 20px;
}
.props-foot {
    grid-column: 2;
}
.props-side {
    grid-column: 3;
    grid-row: 1 / 3;
    display: flex;
    flex-direction: column;
    align-items: flex-end;
    justify-content: space-between;
    padding: 5px 7px 7px;
}

/* Right hand panels */
.gutter {
    display: flex;
    align-items: center;
    background: linear-gradient(90deg, #666, #aaa 50%, #777);
}
.gutter i {
    width: 6px;
    height: 50px;
    background: #ccc;
}
.panels {
    display: flex;
    flex-direction: column;
    background: #efefef;
    border-left: 1px solid #666;
}
.tabs {
    display: flex;
    align-items: flex-end;
    height: 21px;
    padding-left: 2px;
    background: #b5b5b5;
}
.tabs .tab {
    padding: 0 8px;
    font-size: 11px;
}
.tabs .tab.active {
    padding-right: 13px;
}
.tab.line {
    background: linear-gradient(#ddd, #ddd) 100% 5px / 1px 11px no-repeat;
}
.optimize {
    height: 247px;
    padding-top: 9px;
}
.preset {
    display: flex;
    padding-left: 23px;
    background: linear-gradient(#aaa, #aaa) 0 10px / 205px 1px no-repeat;
}
.preset input {
    width: 140px;
    height: 20px;
    border: 1px solid #999;
    background: #fff;
}
.fields {
    display: grid;
    grid-template-columns: 154px 1fr;
    grid-template-rows: 20px 22px 20px 21px;
    column-gap: 4px;
    row-gap: 4px;
    margin-top: 3px;
    font-size: 11px;
}
.fields > label {
    text-align: right;
    line-height: 19px;
}
.format {
    display: flex;
    justify-content: space-between;
    padding-left: 4px;
    line-height: 19px;
}
.format .pick {
    width: 105px;
    border: 1px solid #ddd;
    background: #fff;
}
.fields input {
    width: 36px;
    height: 20px;
    padding-left: 5px;
    background: #fff;
    border: 1px solid #ddd;
    vertical-align: top;
}
.fields input:disabled {
    width: 27px;
    border-color: #aaa;
    border-radius: 2px;
    background: #efefef;
}
.matte {
    width: 24px;
    background: conic-gradient(#fff 25%, #ddd 0 50%, #fff 0 75%, #ddd 0) 2px 2px / 14px 14px;
}
.selective {
    display: flex;
    align-items: center;
    gap: 4px;
}
.smooth {
    width: 50px;
}
.palette {
    height: 60px;
    margin-top: 5px;
    border: 1px solid #999;
}
.sort {
    display: flex;
    gap: 4px;
    height: 21px;
    margin-top: 6px;
    padding-left: 16px;
    font-size: 11px;
    line-height: 21px;
}
.sort .pick {
    width: 87px;
}
.sort span {
    margin-left: 16px;
    line-height: 18px;
}
.palette-icons {
    display: flex;
    gap: 7px;
    padding: 5px 35px 0 93px;
    color: #aaa;
}
.push-right {
    margin-left: auto;
}
.layers {
    height: 102px;
    padding-top: 7px;
    font-size: 11px;
}
.blend {
    display: flex;
    align-items: center;
    gap: 3px;
    height: 21px;
    padding: 0 11px 0 3px;
}
.blend input {
    width: 32px;
    height: 21px;
    margin-left: 1px;
    padding-left: 5px;
    border: 1px solid #aaa;
    border-radius: 2px;
}
.blend .drop {
    width: 14px;
    height: 21px;
}
.blend .drop::after {
    right: 2px;
}
.blend .pick {
    flex: 1;
    height: 21px;
}
.layer-list {
    height: 47px;
    margin: 5px 8px 0 1px;
    border: 1px solid #888;
    background: #fff;
    font-size: 11px;
}
.layer-list li {
    display: flex;
    height: 18px;
    margin-right: 1px;
    border-bottom: 2px solid #777;
}
.layer-list li span {
    display: flex;
    align-items: center;
    width: 22px;
    border-right: 1px solid #bbb;
    background: #efefef;
}
.layer-list li .pen {
    width: 19px;
    justify-content: center;
}
.layer-list li .name {
    flex: 1;
    gap: 6px;
    padding-left: 5px;
    border: 0;
    background: #fff;
}
.layer-list .share {
    margin: 4px 18px 0 0;
}
.layer-list .selected .name {
    background: #3399ff;
    color: #fff;
}
.layer-foot {
    display: flex;
    align-items: center;
    gap: 7px;
    padding: 4px 12px 0 36px;
}
.layer-foot span {
    margin-right: auto;
}
.layer-foot button:first-of-type {
    margin-right: -3px;
}
.dark {
    color: #234878;
}
.assets {
    flex: 1;
    display: flex;
    flex-direction: column;
}
.styles-view {
    flex: 1 1 168px;
    display: flex;
    gap: 2px;
    min-height: 160px;
    height: 168px;
    margin: 6px 2px 0;
    overflow: hidden;
    border-top: 1px solid #777;
}
.style-grid {
    display: grid;
    grid-template-columns: repeat(6, 35px);
    grid-auto-rows: 35px;
    gap: 1px;
    padding: 1px;
    align-self: flex-start;
    background: #000;
}
.style-grid button {
    display: grid;
    place-items: center;
    background: #fff;
}
.style-grid i {
    width: 31px;
    height: 31px;
}
.style-grid .small {
    width: 25px;
    height: 25px;
}
.asset-foot {
    display: flex;
    align-items: center;
    justify-content: flex-end;
    gap: 7px;
    height: 21px;
    padding-right: 5px;
}

/* Style swatches */
.red-gloss { background: radial-gradient(ellipse 28px 14px at 50% 4px, #ffb4b4, rgba(220, 30, 30, 0.4) 70%, transparent), linear-gradient(#c01818, #d01010 50%, #700000); }
.gray-gloss { background: radial-gradient(ellipse 28px 14px at 50% 4px, #aaa, rgba(100, 100, 100, 0.4) 70%, transparent), linear-gradient(#505050, #585858 50%, #343434); }
.blue-box { background: linear-gradient(#40b4ff, #1484ff) 50% 50% / 12px 12px no-repeat, linear-gradient(#90d8ff 2px, #0c50e0 8px, #0828b0); }
.mint { border: 3px solid #2cba90; border-bottom-color: #147858; background: linear-gradient(#fff, #a8ecd0); }
.slate-blue { border: 1px solid #9cb0e0; background: linear-gradient(#a8b8e4 4px, #5070c8 5px); }
.style-grid .crimson { width: 21px; height: 21px; margin-top: -8px; border: 2px solid #a00020; background: linear-gradient(#f01848, #c80028); box-shadow: 0 4px 4px #ffb0c0; }
.aqua { background: linear-gradient(#90f0ff, #20a8d0 48%, #002848 50%, #004870 70%, #0894c0); }
.orange { border: 2px solid #f8c040; background: linear-gradient(#ffb860 5px, #ff8c30 6px, #ffa040); }
.sage { border: 1px solid #5a9c7c; background: linear-gradient(#b4d8c4, #5cac84); }
.lime { border: 1px solid #6c9010; background: linear-gradient(#e8f8a0 8px, #a4d410 10px, #8cbc08); }
.red { background: linear-gradient(#ff8080 3px, #d00000 5px, #ff0808 50%, #c80000 27px, #ff9090 28px); }
.navy { border-bottom: 4px solid #58b0e8; background: linear-gradient(#0838a0, #001060 50%, #0830a0); box-shadow: 0 0 3px #3c84dc; }
.ice { border: 2px solid #ccd8e4; background: linear-gradient(#fff, #e4f0f8); box-shadow: 0 0 3px #bbc8d4; }
.sky { background: linear-gradient(#fff, #70ccf8 60%, #1098e8 62%, #28b0f8); }
.silver { border: 2px solid #c8c8d0; background: linear-gradient(#ccccd4, #fff 50%, #e0e0e8); }
.black { background: #101214; }
.bronze { background: linear-gradient(#5c5448, #988c78 40%, #6c6454 50%, #3c362c); }
.midnight { border: 2px solid #484c54; background: linear-gradient(#080c20, #04081c 35%, #30384c 50%, #20283c); }
.steel { border: 2px solid #1c2028; background: linear-gradient(#485878, #7c94b8 60%, #101418 62%); }
.ocean { border-radius: 4px; background: radial-gradient(ellipse 12px 4px at 50% 80%, #70d8ff, transparent), linear-gradient(#0858a0, #1478c0 50%, #043c78); box-shadow: 0 2px 3px #88a; }
.ink { border: 2px solid #282c38; border-radius: 4px; background: linear-gradient(#485060, #10141c 30%, #080c14 38%, #687080 40%, #20242e 60%, #080a10); }
.dark-red { background: linear-gradient(#b00010, #8c0008 50%, #580004); }
.cyan { background: linear-gradient(#38b8f8, #48c8ff); }
.teal { background: linear-gradient(90deg, #4c9cb4, #a4d8e4, #4c9cb4); }
.pale { border: 1px solid #808c8c; background: #c8d0d2; }
.dusk { border: 1px solid #9098a8; background: #8088a0; }
.frame { border: 2px dashed #282850; background: #f8f8ff; }
.cap { border: 2px solid #101430; border-radius: 4px; background: linear-gradient(#101848 5px, #fff 10px); }
.solid { border: 1px solid #666; background: #000; }

/* Notes */
.site {
    position: absolute;
    top: 23px;
    left: 472px;
    font-family: "Liberation Sans", Arial, sans-serif;
    font-size: 32px;
    line-height: 36px;
    color: #c00000;
    text-shadow: 3px 3px 3px rgba(0, 0, 0, 0.4);
}
.callout {
    position: absolute;
    top: 344px;
    left: 198px;
    width: 247px;
    padding: 29px 20px;
    border: 2px solid #38388f;
    border-radius: 34px;
    background: #fff;
    box-shadow: inset 0 0 20px 2px #6a6ab0;
    font-family: "Liberation Sans", Arial, sans-serif;
    font-size: 16px;
    line-height: 18px;
    text-align: center;
    color: #222;
}
.arrow {
    position: absolute;
    left: 260px;
    top: 484px;
    filter: drop-shadow(4px 4px 2px rgba(0, 0, 0, 0.4));
}
.highlight {
    position: absolute;
    left: 199px;
    top: 623px;
    width: 78px;
    height: 30px;
    border: 3px solid #c00000;
    box-shadow: 3px 3px 4px rgba(0, 0, 0, 0.4), inset 3px 3px 4px rgba(0, 0, 0, 0.2);
}
```
